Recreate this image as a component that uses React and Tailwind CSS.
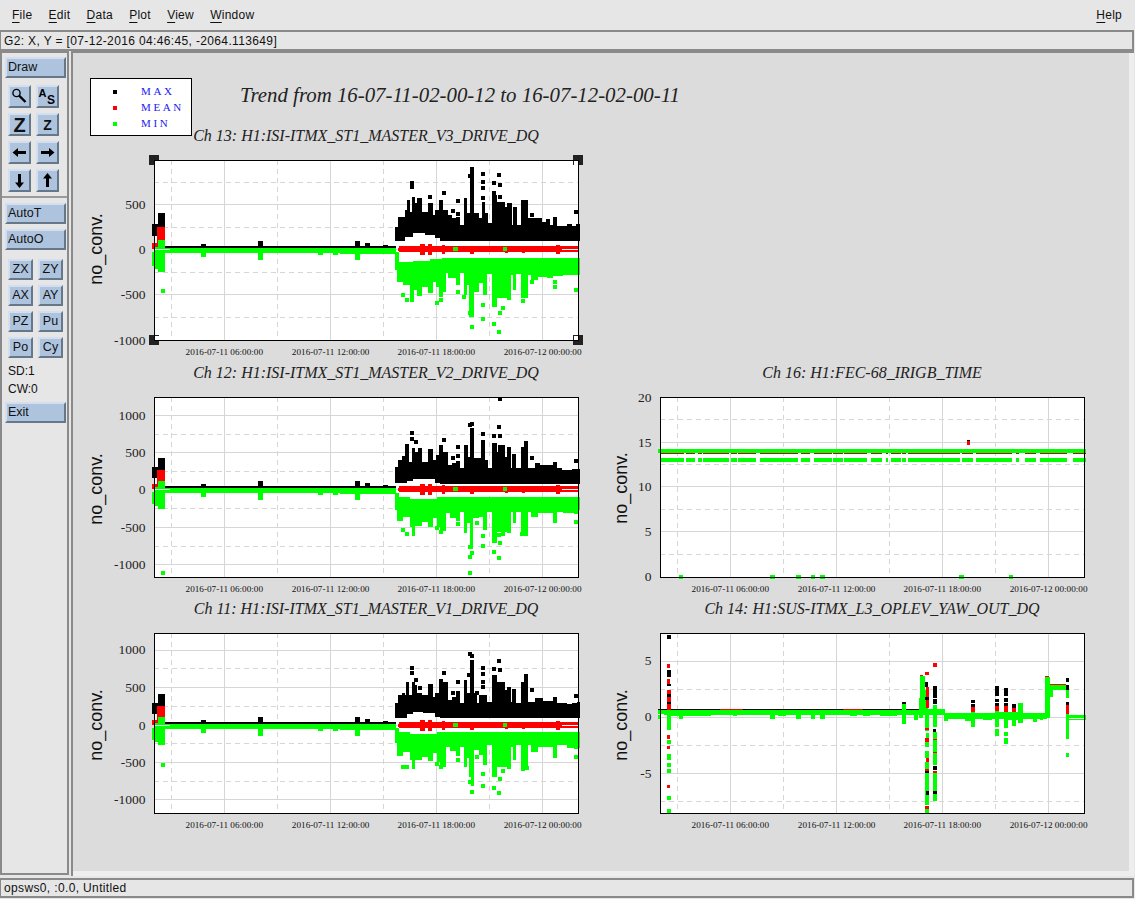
import React from "react";

const BTN = "flex items-center justify-center border-[2px] border-t-[#d3dfee] border-l-[#d3dfee] border-r-[#66778a] border-b-[#66778a] bg-[#aec4de] text-[#111] leading-none";
const SERIF = "[font-family:'Liberation_Serif',serif]";

function Wide({ children, className = "" }) {
  return <div className={`${BTN} w-[61px] h-[21px] justify-start pl-[1px] text-[12.5px] ${className}`}>{children}</div>;
}
function Small({ children }) {
  return <div className={`${BTN} w-[25px] h-[21px] text-[12.5px]`}>{children}</div>;
}
function Square({ children }) {
  return <div className={`${BTN} w-[23px] h-[23px]`}>{children}</div>;
}
const Ico = ({ children }) => <svg width="19" height="19" viewBox="0 0 19 19">{children}</svg>;

function Menu({ l, rest }) {
  return (
    <span>
      <span className="underline underline-offset-[3px] decoration-1">{l}</span>
      {rest}
    </span>
  );
}

function Panel() {
  return (
    <div className="w-[69px] shrink-0 border-2 border-[#8a8a8a] border-t-[#8a8a8a] bg-[#e6e6e6] flex flex-col pt-[4px] text-[12px] text-[#111] h-[824px]">
      <div className="pl-[3px]"><Wide>Draw</Wide></div>
      <div className="grid grid-cols-[23px_23px] gap-x-[5px] gap-y-[5px] pl-[6px] mt-[7px]">
        <Square>
          <Ico>
            <circle cx="6.5" cy="6" r="3.6" fill="none" stroke="#000" strokeWidth="1.4" />
            <path d="M9 8.5 L15.5 15" stroke="#000" strokeWidth="2.4" />
          </Ico>
        </Square>
        <Square>
          <Ico>
            <text x="0.5" y="10" fontSize="11" fontWeight="700" fontFamily="Liberation Sans, sans-serif">A</text>
            <text x="9" y="17" fontSize="12" fontWeight="700" fontFamily="Liberation Sans, sans-serif">S</text>
          </Ico>
        </Square>
        <Square><span className="font-['Liberation_Sans',sans-serif] font-bold text-[20px]">Z</span></Square>
        <Square><span className="font-['Liberation_Sans',sans-serif] font-bold text-[14px]">Z</span></Square>
        <Square><Ico><path d="M2.5 9.5 L8 5 V8 H16 V11 H8 V14 Z" fill="#000" /></Ico></Square>
        <Square><Ico><path d="M16.5 9.5 L11 5 V8 H3 V11 H11 V14 Z" fill="#000" /></Ico></Square>
        <Square><Ico><path d="M9.5 17 L5 11.5 H8 V3 H11 V11.5 H14 Z" fill="#000" /></Ico></Square>
        <Square><Ico><path d="M9.5 2 L5 7.5 H8 V16 H11 V7.5 H14 Z" fill="#000" /></Ico></Square>
      </div>
      <div className="h-[2px] bg-[#9a9a9a] mt-[4px]" />
      <div className="pl-[3px] pt-[5px] flex flex-col gap-[5px]">
        <Wide>AutoT</Wide>
        <Wide>AutoO</Wide>
      </div>
      <div className="grid grid-cols-[25px_25px] gap-x-[5px] gap-y-[5px] pl-[6px] mt-[9px]">
        {["ZX", "ZY", "AX", "AY", "PZ", "Pu", "Po", "Cy"].map((t) => <Small key={t}>{t}</Small>)}
      </div>
      <div className="pl-[6px] mt-[4px] leading-[18px] text-[12px]">
        <div>SD:1</div>
        <div>CW:0</div>
      </div>
      <div className="pl-[3px] mt-[4px]"><Wide>Exit</Wide></div>
    </div>
  );
}

const GX = [70.3, 176.6, 282.3, 388.6];
const DX = [17.7, 123.3, 229.3, 335.3];
const XL = ["2016-07-11 06:00:00", "2016-07-11 12:00:00", "2016-07-11 18:00:00", "2016-07-12 00:00:00"];

function Steps({ ox, oy, top, bot, color }) {
  const at = (list, X) => {
    if (typeof list === "number") return list;
    let v = list[0][1];
    for (const [a, b] of list) if (a <= X) v = b;
    return v;
  };
  const out = [];
  const all = top;
  for (let i = 0; i < all.length; i++) {
    const [X, Y] = all[i];
    const end = i + 1 < all.length ? all[i + 1][0] : 600;
    const cuts = [X];
    if (typeof bot !== "number") for (const [a] of bot) if (a > X && a < end) cuts.push(a);
    cuts.push(end);
    for (let c = 0; c < cuts.length - 1; c++) {
      const y2 = at(bot, cuts[c]);
      out.push(
        <rect key={`${i}-${c}`} x={ox + cuts[c] / 3} y={oy + Math.min(Y, y2) / 3} width={(cuts[c + 1] - cuts[c]) / 3} height={Math.abs(y2 - Y) / 3} fill={color} />
      );
    }
  }
  return <g>{out}</g>;
}

function Pts({ ox, oy, list, color }) {
  return (
    <g>
      {list.map(([X, Y], i) => (
        <rect key={i} x={Math.round(ox + X / 3 - 2)} y={Math.round(oy + Y / 3 - 2)} width="4" height="4" fill={color} />
      ))}
    </g>
  );
}

function Burst({ d }) {
  const { oy, zero, k = 1 } = d;
  const ox = 380;
  const R = (x, y, w, h, c) => <rect x={x} y={zero + y} width={w} height={h} fill={c} />;
  return (
    <g shapeRendering="crispEdges">
      {R(152, -22 * k, 6, 11 * k, "#000")}
      {R(158, -31 * k, 7, 20 * k, "#000")}
      <rect x="165" y={zero - 3} width="231" height="2" fill="#000" />
      {[[203, 2], [260, 5], [357, 5], [367, 3], [385, 1]].map(([x, h], i) => (
        <rect key={i} x={x - 2} y={zero - 3 - h} width="5" height={h} fill="#000" />
      ))}
      <rect x="152" y={zero - 5 * k} width="5" height={5 * k} fill="#f00" />
      <rect x="157" y={zero - 19 * k} width="8" height={18 * k} fill="#f00" />
      <Steps ox={ox} oy={oy} top={d.black} bot={d.blackBot} color="#000" />
      <Pts ox={ox} oy={oy} list={d.bp} color="#000" />
      <rect x="399" y={zero - 3} width="180" height="6" fill="#f00" />
      {[[420, 11, 5], [428, 11, 4], [442, 9, 3], [470, 8, 4], [505, 6, 3], [522, 6, 3], [556, 9, 4], [398, 3, 3]].map(([x, h, w], i) => (
        <rect key={i} x={x} y={zero - h / 2 + 0.5} width={w} height={h} fill="#f00" />
      ))}
      <rect x="562" y={zero} width="16" height="1" fill="#fff" />
      <rect x="453" y={zero - 2} width="5" height="4" fill="#0f0" />
      <rect x="503" y={zero - 2} width="4" height="4" fill="#0f0" />
      <rect x="165" y={zero - 1} width="231" height="5" fill="#0f0" />
      <rect x="340" y={zero - 1} width="55" height="6" fill="#0f0" />
      {[[203, 5], [260, 8], [357, 8], [335, 3], [320, 3]].map(([x, h], i) => (
        <rect key={i} x={x - 2} y={zero + 3} width="5" height={h} fill="#0f0" />
      ))}
      <rect x="152" y={zero + 3} width="4" height={12 * k} fill="#0f0" />
      <rect x="155" y={zero - 2 * k} width="4" height={19 * k} fill="#0f0" />
      <rect x="158" y={zero - 8 * k} width="7" height={28 * k} fill="#0f0" />
      <rect x="155" y={zero} width="15" height="1" fill="#dfe" />
      <rect x="161" y={zero + d.spike - 2} width="4" height="4" fill="#0f0" />
      <Steps ox={ox} oy={oy} top={d.green} bot={d.greenTop} color="#0f0" />
      <Pts ox={ox} oy={oy} list={d.gp} color="#0f0" />
    </g>
  );
}

const CH13 = {
  oy: 150, zero: 249, k: 1.15, spike: 42,
  black: [[45,230],[55,200],[65,200],[75,180],[80,150],[90,185],[95,140],[105,160],[110,145],[125,185],[145,160],[158,195],[165,180],[178,150],[190,180],[203,195],[215,205],[228,200],[240,225],[252,145],[262,190],[270,52],[283,190],[298,205],[305,155],[316,190],[325,220],[337,135],[350,155],[375,170],[382,160],[395,225],[398,170],[410,225],[423,150],[443,205],[465,205],[485,215],[497,208],[510,225],[520,200],[530,228],[560,222],[575,228],[588,222]],
  blackBot: [[45,272],[75,262],[100,250],[135,255],[165,265],[180,272]],
  green: [[45,360],[52,395],[70,405],[90,455],[103,420],[110,438],[125,410],[145,428],[160,395],[168,412],[178,440],[190,425],[197,370],[205,385],[228,405],[240,370],[252,435],[262,405],[266,500],[283,425],[297,400],[310,435],[322,372],[337,470],[350,445],[380,450],[392,375],[398,420],[408,372],[423,445],[445,375],[452,390],[475,380],[500,385],[520,378],[550,375],[595,375]],
  greenTop: [[45,305],[57,335],[100,332],[150,328],[185,323]],
  bp: [[97,100],[97,110],[150,142],[192,128],[234,152],[219,183],[234,192],[456,195],[588,185],[309,95],[309,73],[342,98],[357,74],[360,105],[342,128],[360,142],[270,77],[309,115],[309,145]],
  gp: [[69,436],[81,450],[171,459],[183,450],[234,425],[309,466],[309,507],[342,521],[357,545],[360,490],[369,473],[276,530],[270,490],[429,452],[525,395],[525,410],[588,421],[456,395],[252,441]],
};
const CH12 = {
  oy: 390, zero: 489, spike: 84,
  black: [[45,230],[55,210],[65,198],[75,162],[88,215],[95,175],[105,185],[115,175],[127,215],[145,178],[160,210],[168,195],[178,165],[190,185],[203,225],[215,220],[228,212],[240,235],[252,165],[265,200],[270,115],[283,205],[303,150],[316,210],[323,235],[337,160],[350,185],[355,165],[375,200],[382,170],[392,235],[397,192],[408,235],[422,172],[445,235],[465,220],[480,225],[495,225],[520,215],[530,235],[545,240],[575,238],[590,238]],
  blackBot: [[45,280],[80,272],[100,266],[130,268],[165,278],[180,281]],
  green: [[45,360],[52,393],[70,380],[90,410],[97,437],[105,408],[125,395],[145,410],[160,385],[170,410],[180,420],[190,422],[197,370],[210,383],[228,393],[240,365],[252,428],[262,400],[270,478],[280,385],[297,380],[310,420],[322,365],[337,458],[350,425],[380,430],[392,365],[398,400],[408,365],[423,435],[445,365],[452,382],[475,370],[520,398],[530,365],[550,370],[590,360]],
  greenTop: [[45,310],[57,322],[90,328],[130,326],[170,320]],
  bp: [[97,128],[97,146],[109,155],[192,150],[234,170],[234,197],[219,203],[456,203],[588,212],[342,138],[360,138],[357,110],[309,131],[360,28],[437,158],[437,164],[270,105],[276,102]],
  gp: [[69,420],[81,432],[171,415],[183,427],[234,401],[291,398],[309,437],[309,467],[342,487],[357,503],[360,458],[369,431],[357,435],[270,470],[270,500],[276,490],[270,548],[426,431],[438,433],[525,392],[588,395],[588,365]],
};
const CH11 = {
  oy: 625, zero: 725, spike: 40,
  black: [[45,235],[55,210],[65,203],[75,210],[78,172],[88,210],[95,172],[105,180],[112,203],[127,210],[145,178],[158,215],[165,203],[178,162],[190,172],[203,225],[215,215],[228,210],[240,235],[252,165],[262,205],[270,105],[283,205],[290,235],[298,210],[320,232],[337,150],[350,172],[375,195],[382,185],[392,232],[397,192],[408,235],[422,172],[432,148],[445,230],[465,220],[490,228],[520,218],[530,235],[560,238],[575,235],[590,232]],
  blackBot: [[45,278],[80,268],[100,262],[130,264],[165,276],[180,278]],
  green: [[45,355],[52,393],[70,380],[90,405],[97,433],[105,405],[125,395],[145,407],[160,385],[170,410],[180,425],[190,425],[197,365],[210,378],[228,392],[240,365],[252,425],[262,400],[268,455],[272,482],[283,375],[297,390],[310,420],[322,360],[337,455],[350,425],[380,432],[392,365],[398,405],[408,360],[423,435],[445,360],[452,380],[475,365],[520,398],[530,360],[560,370],[590,370]],
  greenTop: [[45,308],[57,322],[90,328],[130,326],[170,322]],
  bp: [[97,128],[97,143],[109,165],[120,190],[192,143],[234,170],[219,203],[234,203],[456,195],[525,222],[588,212],[270,87],[276,93],[309,128],[309,148],[309,170],[309,185],[342,132],[360,135],[357,108],[291,205],[268,150]],
  gp: [[69,425],[81,425],[171,416],[183,427],[234,404],[291,395],[309,448],[309,482],[342,488],[357,505],[360,462],[369,437],[276,500],[270,470],[429,431],[440,430],[525,390],[588,395],[588,365]],
};

function Z16() {
  const seg = [[152,222],[228,255],[265,275],[280,358],[362,382],[385,428],[430,438],[450,565],[573,600],[612,667],[670,698],[702,772],[783,817],[827,835],[843,872],[875,888],[895,1050],[1056,1088],[1098,1206],[1218,1227],[1245,1278],[1290,1372],[1390,1428]];
  const z = (X) => 610 + X / 3;
  const y = (Y) => 380 + Y / 3;
  return (
    <g shapeRendering="crispEdges">
      <rect x={z(1070)} y={y(180)} width="3" height="1" fill="#000" />
      <rect x={z(1071)} y={y(182)} width="3" height="4" fill="#f00" />
      <rect x="658" y={y(207)} width="428" height="4" fill="#0f0" />
      {seg.map(([a, b], i) => <rect key={`r${i}`} x={z(a)} y={y(218)} width={(b - a) / 3} height="1" fill="#a11" />)}
      {seg.map(([a, b], i) => <rect key={i} x={z(a)} y={y(234)} width={(b - a) / 3} height="4" fill="#0f0" />)}
      {[[207,219],[480,495],[558,573],[603,615],[630,645],[1047,1062],[1197,1209]].map(([a, b], i) => (
        <rect key={`g${i}`} x={z(a)} y={y(586)} width={(b - a) / 3} height="4" fill="#0f0" />
      ))}
    </g>
  );
}

function Z14() {
  const ox = 610, oy = 625;
  const r = (c, a, b, d, e, k) => <rect key={k} x={ox + a / 3} y={oy + b / 3} width={(d - a) / 3} height={(e - b) / 3} fill={c} />;
  const K = "#000", R = "#f00", G = "#0f0";
  const rows = [
    [K,145,252,930,255],[R,330,252,400,255],[R,700,252,760,255],[K,875,232,888,240],[K,1005,263,1310,265],
    [K,171,31,183,41],[R,171,118,181,129],[K,171,135,183,155],[R,171,163,181,177],[K,171,178,183,183],[R,171,195,183,206],[K,171,206,183,215],[R,171,216,183,230],[K,171,230,183,238],[R,171,238,183,256],
    [R,171,331,180,342],[R,171,362,180,372],[R,171,481,180,489],
    [G,145,255,930,270],[G,145,270,152,282],[G,175,270,300,273],[G,171,270,183,316],
    [G,171,346,183,357],[G,171,388,183,404],[G,171,414,183,426],[G,171,432,183,443],[G,171,514,183,525],[G,171,552,183,564],
    [G,207,270,219,282],[G,243,270,255,274],[G,282,270,303,274],[G,368,270,380,274],[G,480,270,495,282],[G,505,270,528,273],[G,558,270,573,282],[G,603,270,615,282],[G,630,270,645,282],[G,720,270,740,274],[G,760,270,780,274],[G,810,270,860,273],
    [G,875,238,888,297],[G,912,270,924,285],
    [R,945,141,957,150],[R,930,150,940,155],[G,928,218,938,280],[G,930,154,945,240],[G,938,195,955,270],
    [K,945,170,955,185],[R,948,186,957,250],[K,945,215,957,225],[G,938,252,1005,270],
    [G,946,270,958,318],[R,945,310,957,316],[G,948,325,958,340],[R,945,340,957,350],[G,946,352,958,366],[G,946,378,958,398],[R,948,400,956,410],[G,946,412,958,432],[R,945,432,957,440],[K,945,438,957,445],[G,946,445,958,540],[K,948,498,958,510],[R,946,542,958,552],[G,946,552,958,565],
    [R,969,114,981,126],[K,968,183,982,220],[K,968,222,982,238],[G,968,240,980,252],
    [G,968,268,982,305],[K,968,312,978,322],[G,969,322,981,342],[R,968,342,980,346],[G,969,346,981,380],[R,968,380,980,384],[G,969,384,981,420],[K,968,424,980,436],[R,968,438,980,444],[G,969,444,981,498],[K,970,498,981,506],[G,969,506,981,528],
    [G,1003,265,1085,281],[G,1003,281,1014,287],[G,1065,281,1085,287],
    [K,1083,225,1095,235],[K,1083,237,1095,245],[R,1083,245,1095,262],[G,1083,262,1095,305],
    [G,1095,265,1155,282],[G,1120,282,1145,286],
    [K,1155,183,1167,212],[K,1155,222,1167,232],[K,1155,234,1167,242],[R,1155,242,1167,258],[G,1155,258,1167,307],[G,1155,312,1167,332],
    [G,1167,262,1182,282],
    [K,1182,188,1194,212],[K,1182,218,1194,232],[K,1182,234,1194,242],[R,1182,242,1194,260],[G,1182,260,1194,310],[G,1182,321,1194,334],[G,1182,340,1194,357],
    [G,1194,262,1205,285],
    [K,1205,238,1217,250],[R,1205,250,1217,262],[G,1205,262,1217,302],
    [G,1217,262,1225,285],[G,1225,235,1238,295],[G,1238,264,1310,281],[G,1270,281,1282,290],[G,1290,281,1300,286],
    [R,1305,153,1318,158],[G,1305,156,1320,280],[R,1320,176,1368,179],[G,1318,179,1378,195],[G,1318,195,1328,215],
    [K,1368,159,1378,171],[K,1368,180,1378,195],[G,1368,195,1378,219],[K,1368,232,1378,240],[R,1368,240,1378,268],
    [G,1368,268,1378,320],[G,1368,320,1378,342],[G,1368,385,1378,395],
    [G,1378,270,1428,286],
  ];
  return (
    <g shapeRendering="crispEdges">
      {rows.map(([c, a, b, d, e], i) => r(c, a, b, d, e, i))}
      <rect x={ox + 1378 / 3} y={oy + 278 / 3} width="16" height="1" fill="#fff" />
      <rect x={ox + 145 / 3} y={oy + 266 / 3} width="6" height="1" fill="#fff" />
    </g>
  );
}

function Handles({ left, top }) {
  const w = 424, h = 180;
  return (
    <g shapeRendering="crispEdges">
      {[[left, top, 1, 1], [left + w, top, -1, 1], [left, top + h, 1, -1], [left + w, top + h, -1, -1]].map(([x, y, sx, sy], i) => (
        <g key={i}>
          <rect x={x - 5} y={y - 5} width="10" height="10" fill="#222" />
          <rect x={sx > 0 ? x : x - 4} y={sy > 0 ? y : y - 4} width="5" height="5" fill="#000" />
          <rect x={sx > 0 ? x + 1 : x - 4} y={sy > 0 ? y + 1 : y - 4} width="4" height="4" fill="#fff" />
        </g>
      ))}
    </g>
  );
}

function Chart({ title, left, top, ticks, solid, dashed, labelX, labelY, children }) {
  const vx = left - 69;
  const vy = top - 15;
  return (
    <div className="w-[506px] flex flex-col">
      <div className={`${SERIF} italic text-[16px] text-[#222] leading-[18px] h-[18px] ml-[69px] w-[424px] text-center whitespace-nowrap`}>{title}</div>
      <svg width="506" height="218" viewBox={`${vx} ${vy} 506 218`} className="block">
        <rect x={left} y={top} width="424" height="180" fill="#fff" />
        <g stroke="#d6d6d6" strokeWidth="1.2" shapeRendering="crispEdges">
          {solid.map((y) => <line key={y} x1={left} x2={left + 424} y1={y + 0.5} y2={y + 0.5} />)}
          {GX.map((x) => <line key={x} x1={left + x} x2={left + x} y1={top} y2={top + 180} />)}
        </g>
        <g stroke="#d6d6d6" strokeWidth="1.2" strokeDasharray="5 4" shapeRendering="crispEdges">
          {dashed.map((y) => <line key={y} x1={left} x2={left + 424} y1={y + 0.5} y2={y + 0.5} />)}
          {DX.map((x) => <line key={x} x1={left + x} x2={left + x} y1={top} y2={top + 180} />)}
        </g>
        {children}
        <rect x={left} y={top} width="424" height="180" fill="none" stroke="#000" strokeWidth="1" shapeRendering="crispEdges" />
        {ticks.map(([t, y]) => (
          <text key={t} x={left - 8.5} y={y + 4.5} textAnchor="end" fontSize="13.5" fill="#222" className={SERIF}>{t}</text>
        ))}
        {XL.map((t, i) => (
          <text key={t} x={left + GX[i]} y={top + 195} textAnchor="middle" fontSize="9.2" fill="#111" className={SERIF}>{t}</text>
        ))}
        <text transform={`translate(${labelX} ${labelY}) rotate(-90)`} textAnchor="middle" fontSize="18" fill="#111" className="[font-family:'Liberation_Sans',sans-serif]">no_conv.</text>
      </svg>
    </div>
  );
}

function Legend() {
  const rows = [["MAX", "bg-black"], ["MEAN", "bg-[#f00]"], ["MIN", "bg-[#0f0]"]];
  return (
    <div className="w-[102px] h-[58px] bg-white border border-black flex flex-col justify-center gap-[2px] shrink-0 pt-[1px]">
      {rows.map(([t, c]) => (
        <div key={t} className="flex items-center h-[14px]">
          <div className={`w-[4px] h-[4px] ml-[22px] mr-[24px] ${c}`} />
          <span className={`${SERIF} text-[11px] tracking-[2.6px] text-[#2020f0]`}>{t}</span>
        </div>
      ))}
    </div>
  );
}

export default function App() {
  const sans = "font-['Liberation_Sans',sans-serif]";
  return (
    <div className={`w-[1135px] h-[899px] bg-[#e6e6e6] flex flex-col overflow-hidden ${sans} text-[12px] text-[#111]`}>
      <div className="h-[30px] shrink-0 flex items-center justify-between pl-[12px] pr-[13px] tracking-[0.02em]">
        <div className="flex gap-[16.3px]">
          <Menu l="F" rest="ile" />
          <Menu l="E" rest="dit" />
          <Menu l="D" rest="ata" />
          <Menu l="P" rest="lot" />
          <Menu l="V" rest="iew" />
          <Menu l="W" rest="indow" />
        </div>
        <Menu l="H" rest="elp" />
      </div>
      <div className="h-[21px] w-[1134px] shrink-0 border-y-2 border-r-2 border-l border-[#8a8a8a] flex items-center pl-[3px] whitespace-nowrap tracking-[0.03em]">
        G2: X, Y = [07-12-2016 04:46:45, -2064.113649]
      </div>
      <div className="flex flex-1 min-h-0 w-[1134px]">
        <Panel />
        <div className="flex-1 ml-[2px] border-l-2 border-t-2 border-[#8a8a8a] bg-[#eeeeee] pr-[5px] pb-[5px]">
          <div className="h-full bg-[#dcdcdc] pl-[12px] pt-[25px]">
            <div className="flex items-start h-[49px]">
              <div className="ml-[5px]"><Legend /></div>
              <div className={`${SERIF} italic text-[20.85px] text-[#222] ml-[48px] mt-[2px] whitespace-nowrap`}>
                Trend from 16-07-11-02-00-12 to 16-07-12-02-00-11
              </div>
            </div>
            <div className="grid grid-cols-[506px_506px] grid-rows-[237px_236px_236px]">
              <Chart title="Ch 13: H1:ISI-ITMX_ST1_MASTER_V3_DRIVE_DQ" left={154} top={160}
                ticks={[["500", 204], ["0", 249], ["-500", 294], ["-1000", 340]]}
                solid={[204, 249, 294]} dashed={[182, 227, 272, 317]} labelX={102} labelY={249}>
                <Burst d={CH13} />
                <Handles left={154} top={160} />
              </Chart>
              <div />
              <Chart title="Ch 12: H1:ISI-ITMX_ST1_MASTER_V2_DRIVE_DQ" left={154} top={397}
                ticks={[["1000", 415], ["500", 452], ["0", 489], ["-500", 527], ["-1000", 564]]}
                solid={[415, 452, 489, 527, 564]} dashed={[434, 471, 508, 546]} labelX={102} labelY={489}>
                <Burst d={CH12} />
              </Chart>
              <Chart title="Ch 16: H1:FEC-68_IRIGB_TIME" left={660} top={397}
                ticks={[["20", 397], ["15", 442], ["10", 486], ["5", 531], ["0", 576]]}
                solid={[442, 486, 531]} dashed={[419, 464, 509, 554]} labelX={627} labelY={488}>
                <Z16 />
              </Chart>
              <Chart title="Ch 11: H1:ISI-ITMX_ST1_MASTER_V1_DRIVE_DQ" left={154} top={633}
                ticks={[["1000", 649], ["500", 687], ["0", 725], ["-500", 762], ["-1000", 799]]}
                solid={[650, 687, 725, 762, 799]} dashed={[668, 706, 743, 781]} labelX={102} labelY={725}>
                <Burst d={CH11} />
              </Chart>
              <Chart title="Ch 14: H1:SUS-ITMX_L3_OPLEV_YAW_OUT_DQ" left={660} top={633}
                ticks={[["5", 660], ["0", 716], ["-5", 773]]}
                solid={[661, 717, 773]} dashed={[689, 745, 801]} labelX={627} labelY={725}>
                <Z14 />
              </Chart>
            </div>
          </div>
        </div>
      </div>
      <div className="h-[20px] w-[1134px] shrink-0 mt-[2px] mb-[1px] border-y-2 border-r-2 border-l border-[#8a8a8a] flex items-center pl-[3px] whitespace-nowrap tracking-[0.03em]">
        opsws0, :0.0, Untitled
      </div>
    </div>
  );
}
